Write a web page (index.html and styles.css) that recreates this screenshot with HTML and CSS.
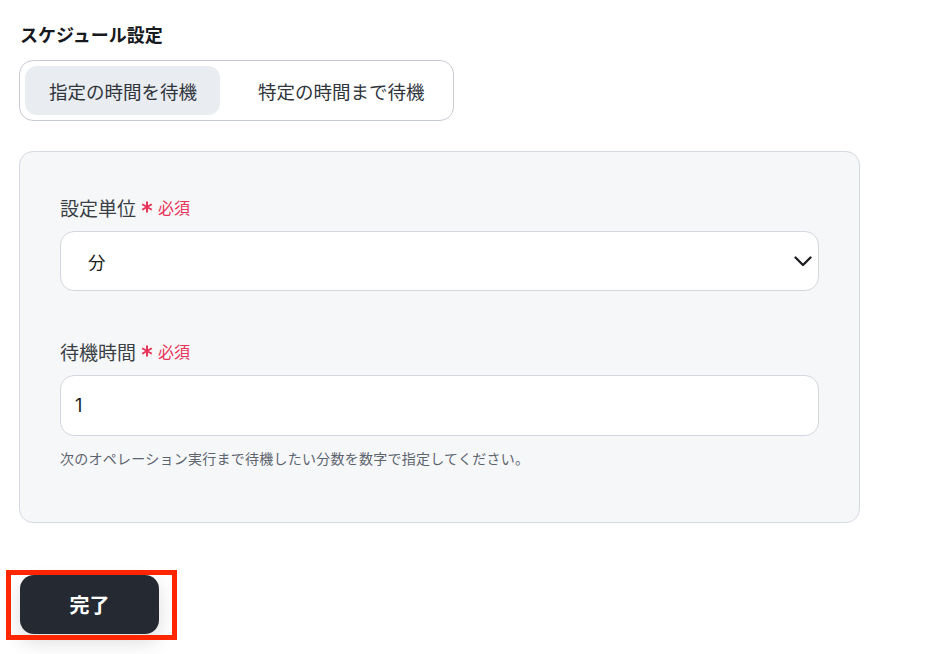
FILE: index.html
```html
<!DOCTYPE html>
<html lang="ja">
<head>
<meta charset="utf-8">
<link rel="stylesheet" href="styles.css">
</head>
<body>
<div class="page">
  <h2 class="title">スケジュール設定</h2>
  <div class="tabs">
    <div class="tab active">指定の時間を待機</div>
    <div class="tab">特定の時間まで待機</div>
  </div>
  <div class="panel">
    <div class="field">
      <div class="label">設定単位<span class="req"><svg class="ast" width="12" height="12" viewBox="0 0 12 12"><path d="M6 0.5 V11.5 M1.2 3.25 L10.8 8.75 M1.2 8.75 L10.8 3.25" stroke="#e8345a" stroke-width="2" stroke-linecap="butt"/></svg>必須</span></div>
      <div class="select">
        <span class="val">分</span>
        <svg class="chev" width="18" height="11" viewBox="0 0 18 11"><path d="M1.5 1.5 L9 9 L16.5 1.5" fill="none" stroke="#1a1c1f" stroke-width="2.3" stroke-linecap="round" stroke-linejoin="round"/></svg>
      </div>
    </div>
    <div class="field second">
      <div class="label">待機時間<span class="req"><svg class="ast" width="12" height="12" viewBox="0 0 12 12"><path d="M6 0.5 V11.5 M1.2 3.25 L10.8 8.75 M1.2 8.75 L10.8 3.25" stroke="#e8345a" stroke-width="2" stroke-linecap="butt"/></svg>必須</span></div>
      <div class="input">1</div>
      <div class="help">次のオペレーション実行まで待機したい分数を数字で指定してください。</div>
    </div>
  </div>
  <button class="done">完了</button>
  <div class="highlight"></div>
</div>
</body>
</html>
```

FILE: styles.css
```css
html, body {
  margin: 0;
  padding: 0;
  background: #ffffff;
}
body {
  font-family: "Noto Sans CJK JP", "Noto Sans", sans-serif;
  color: #1c1f24;
}
.page {
  position: relative;
  padding: 22px 0 0 19px;
  height: 654px;
  box-sizing: border-box;
}
.title {
  margin: 0 0 13px 1px;
  font-size: 18px;
  line-height: 25px;
  font-weight: 700;
  color: #16191d;
}
.tabs {
  display: inline-flex;
  gap: 14px;
  padding: 5px;
  border: 1px solid #c6cbd3;
  border-radius: 14px;
  height: 49px;
}
.tab {
  display: flex;
  align-items: center;
  padding: 0 23px 0 24px;
  font-size: 18.5px;
  color: #30353c;
  border-radius: 12px;
  height: 49px;
}
.tab.active {
  background: #e9ecf0;
}
.panel {
  margin-top: 30px;
  width: 759px;
  padding: 43px 40px 54px 40px;
  background: #f6f7f9;
  border: 1px solid #d5d9e0;
  border-radius: 14px;
}
.field {
  display: flex;
  flex-direction: column;
}
.field.second {
  margin-top: 48px;
}
.label {
  display: flex;
  align-items: center;
  height: 24px;
  font-size: 19px;
  color: #3a3f46;
}
.req {
  display: inline-flex;
  align-items: center;
  margin-left: 5px;
  font-size: 16px;
  color: #e8345a;
}
.ast {
  margin-right: 5px;
}
.select, .input {
  margin-top: 12px;
  height: 58px;
  background: #ffffff;
  border: 1px solid #d2d6dd;
  border-radius: 14px;
  display: flex;
  align-items: center;
  box-sizing: content-box;
}
.select {
  justify-content: space-between;
  padding: 0 6px 0 27px;
}
.val {
  font-size: 17.5px;
  color: #1b1d20;
}
.input {
  height: 59px;
  padding: 0 14px;
  font-family: "Inter", "Noto Sans", sans-serif;
  font-size: 18px;
  color: #1b1d20;
}
.help {
  margin-top: 12px;
  font-size: 14px;
  line-height: 20px;
  letter-spacing: 0.25px;
  color: #5d646e;
}
.done {
  display: block;
  margin: 52px 0 0 1px;
  width: 139px;
  height: 59px;
  border: none;
  border-radius: 14px;
  background: #252a32;
  color: #ffffff;
  font-family: inherit;
  font-size: 20px;
  font-weight: 700;
  box-shadow: 0 8px 20px rgba(0, 0, 0, 0.14);
}
.highlight {
  position: absolute;
  left: 6px;
  top: 570px;
  width: 161px;
  height: 60px;
  border: 5px solid #ff2600;
}
```
